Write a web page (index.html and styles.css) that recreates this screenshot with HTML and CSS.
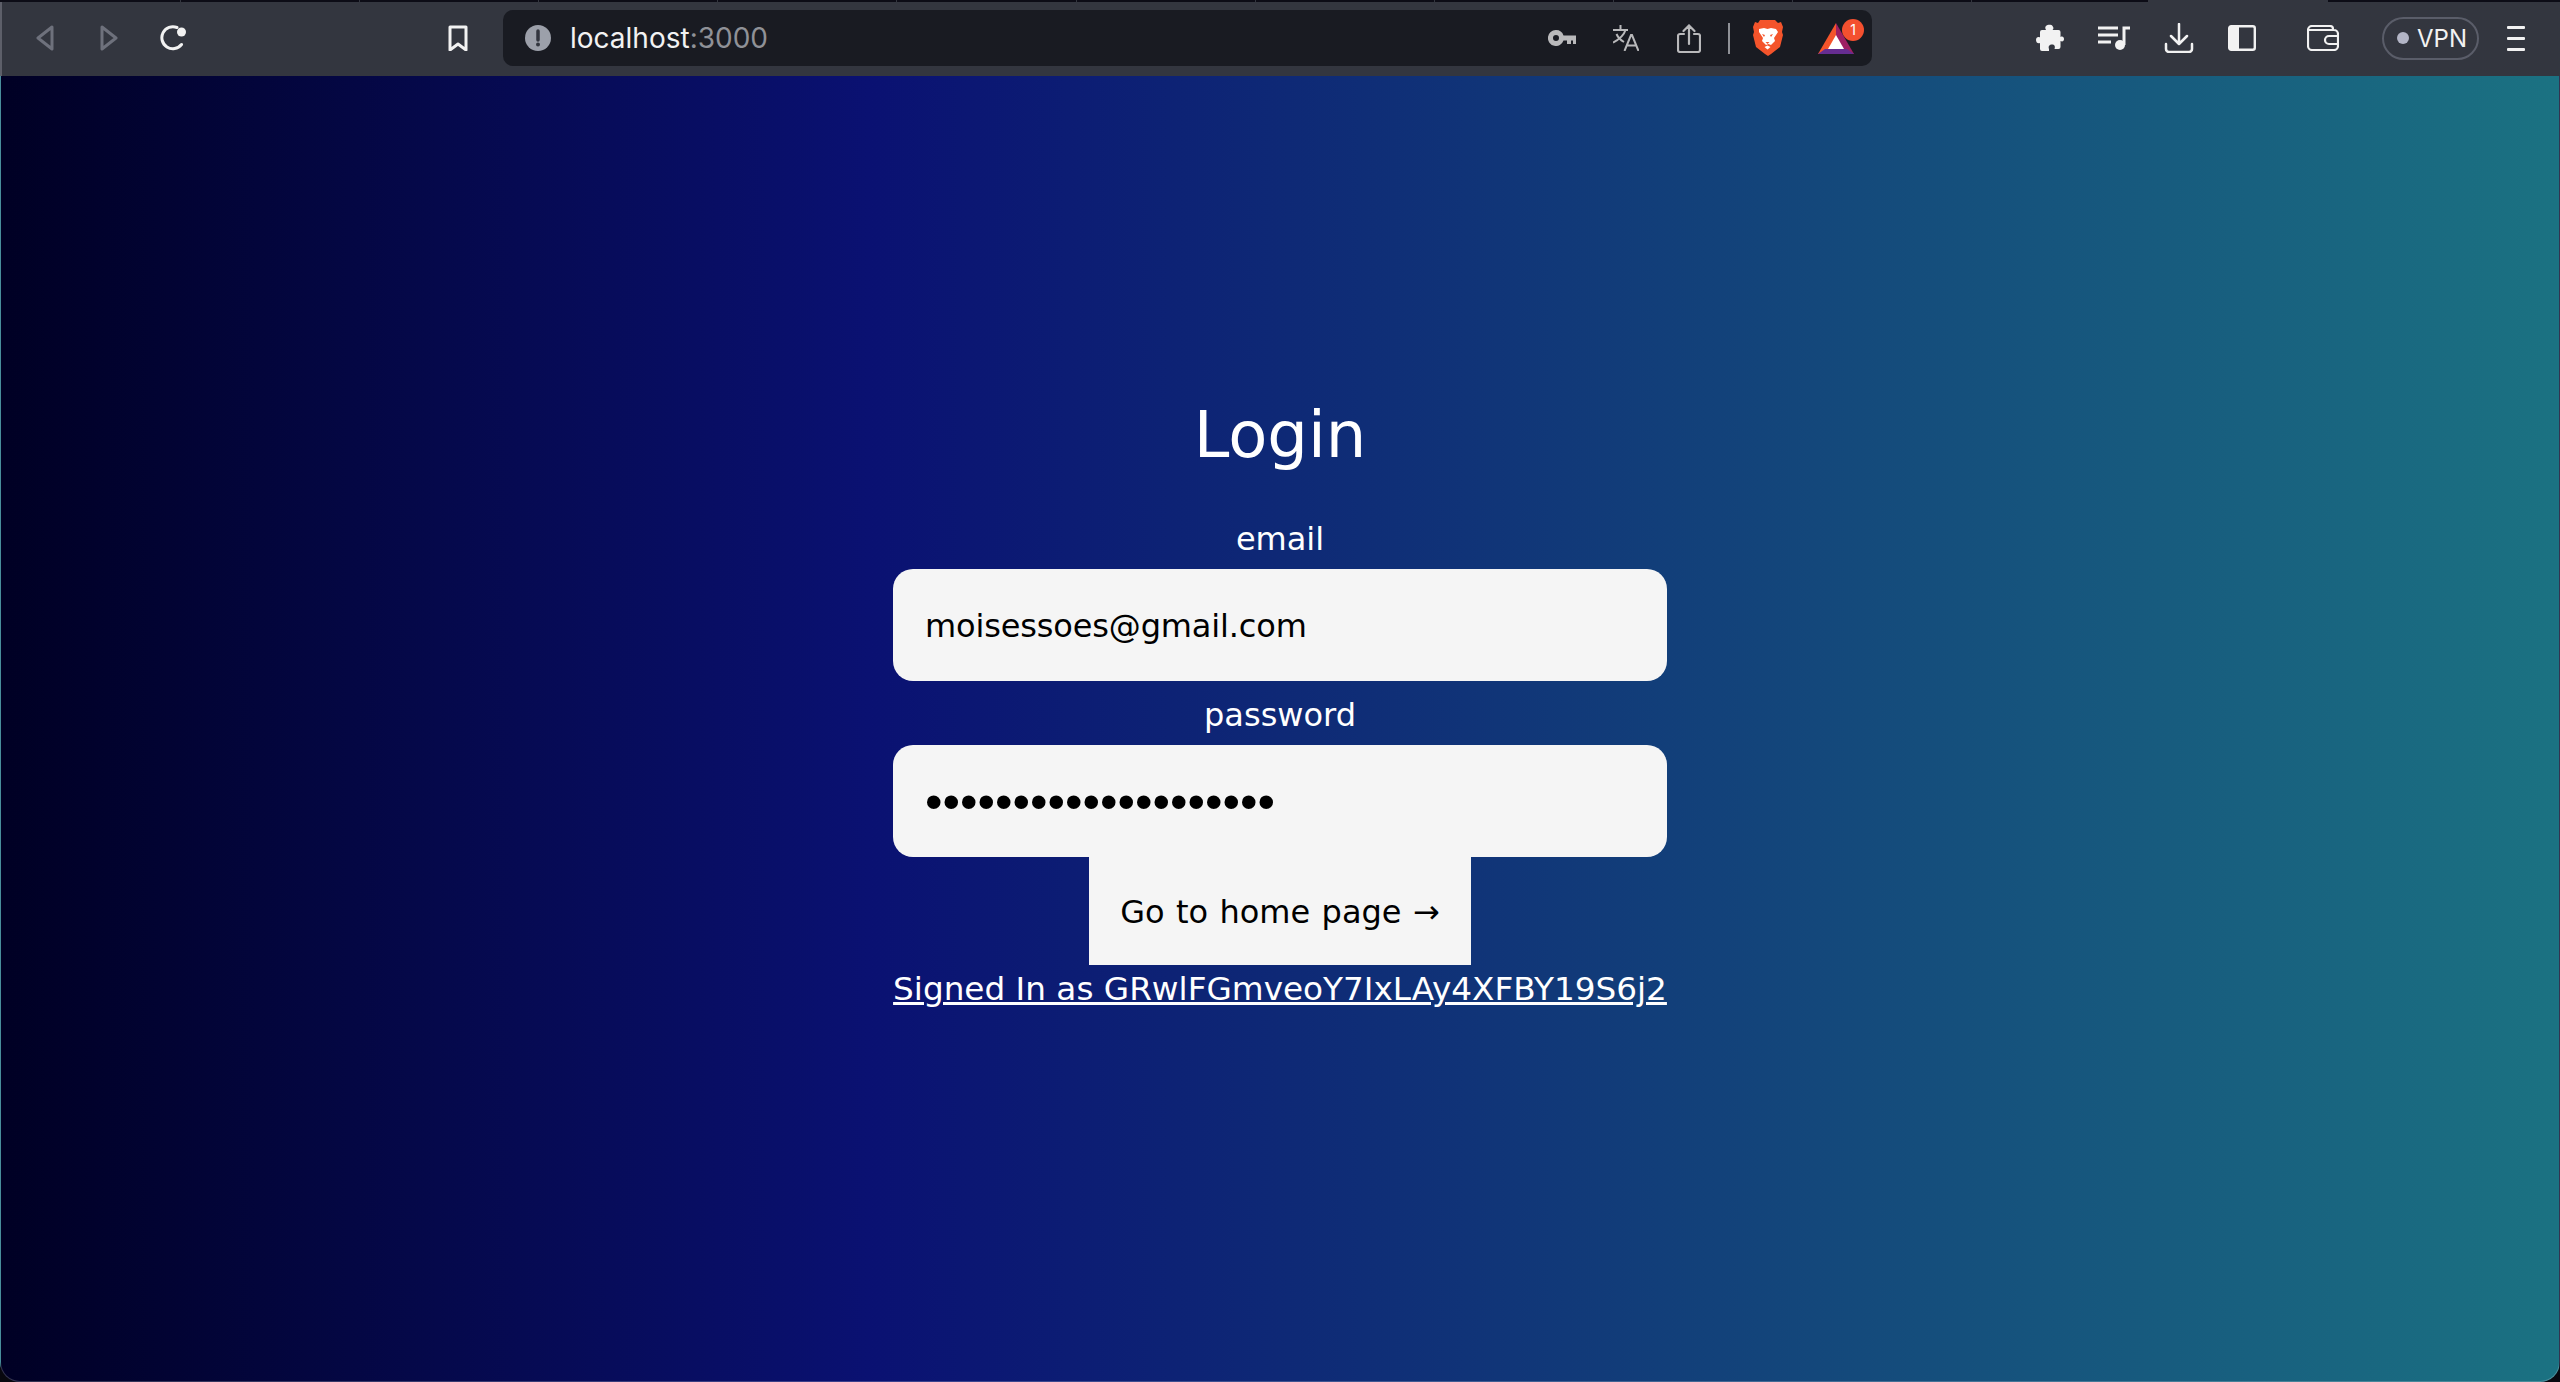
FILE: index.html
```html
<!DOCTYPE html>
<html lang="en">
<head>
  <meta charset="UTF-8">
  <meta name="viewport" content="width=device-width, initial-scale=1.0">
  <title>Login</title>
  <link rel="stylesheet" href="styles.css">
</head>
<body>

  <!-- Tab strip -->
  <div class="tabs">
    <div class="tab"></div><div class="tab"></div><div class="tab"></div><div class="tab"></div>
    <div class="tab"></div><div class="tab"></div><div class="tab"></div><div class="tab"></div>
    <div class="tab"></div><div class="tab"></div><div class="tab"></div><div class="tab"></div>
    <div class="tab active"></div>
  </div>

  <!-- Browser toolbar -->
  <div class="toolbar">
    <div class="nav">
      <svg class="icon back" width="20" height="26" viewBox="0 0 20 26"><path d="M17 2 3 13l14 11z" fill="none" stroke="#6e717c" stroke-width="3" stroke-linejoin="round"/></svg>
      <svg class="icon forward" width="20" height="26" viewBox="0 0 20 26"><path d="M3 2l14 11L3 24z" fill="none" stroke="#6e717c" stroke-width="3" stroke-linejoin="round"/></svg>
      <svg class="icon reload" width="28" height="26" viewBox="0 0 28 26"><path d="M21.500 19.500A11 11 0 1 1 17 2.500" fill="none" stroke="#f2f2f2" stroke-width="3" stroke-linecap="round"/><circle cx="21.500" cy="7" r="4.500" fill="#f2f2f2"/></svg>
      <svg class="icon bookmark" width="20" height="26" viewBox="0 0 20 26"><path d="M2 2h16v23l-8-6-8 6z" fill="none" stroke="#f2f2f2" stroke-width="3" stroke-linejoin="round"/></svg>
    </div>

    <div class="urlbar">
      <svg class="icon info" width="26" height="26" viewBox="0 0 26 26"><circle cx="13" cy="13" r="13" fill="#9ca0aa"/><path d="M13 6v9" stroke="#33363f" stroke-width="3.500" stroke-linecap="round"/><circle cx="13" cy="19.500" r="2" fill="#33363f"/></svg>
      <div class="url">localhost<span class="port">:3000</span></div>
      <div class="url-actions">
        <svg class="icon" width="28" height="16" viewBox="0 0 28 16"><path d="M8 0a8 8 0 1 0 7.500 10.500H19V14h4v-3.500h2V14h3V5.500H15.500A8 8 0 0 0 8 0zm0 5a3 3 0 1 1 0 6 3 3 0 0 1 0-6z" fill="#b9b9bb"/></svg>
        <svg class="icon" width="26" height="26" viewBox="0 0 26 26"><path d="M0 5h15M7.500 0v5M12.500 5C11 10 7 14 0 17.500M3.500 9c1.500 3.500 4 6 7.500 8M11.500 26l6.500-16h1l6.500 16M14 20.500h9" fill="none" stroke="#b9b9bb" stroke-width="2"/></svg>
        <svg class="icon share" width="24" height="29" viewBox="0 0 24 29"><path d="M7 10H3a2 2 0 0 0-2 2v14a2 2 0 0 0 2 2h18a2 2 0 0 0 2-2V12a2 2 0 0 0-2-2h-4M12 20V2M6.500 7 12 1.500 17.500 7" fill="none" stroke="#b9b9bb" stroke-width="2.200" stroke-linecap="round"/></svg>
        <span class="divider"></span>
        <svg class="icon" width="31" height="36" viewBox="0 0 31 36"><path d="M8 0h15l3 3 3-1 2 5-1 5 1 3-3 12-9 7-3 2-3-2-9-7L1 15l1-3-1-5 2-5 3 1z" fill="#f4542b"/><path d="M7 9l5-1 3.500 1L19 8l5 1 2 3-4 6 1 3-4 4-2.500-1-2.500 1-4-4 1-3-4-6z" fill="#fff"/><path d="M12.500 27l3-1.500 3 1.500-3 2.500z" fill="#fff"/><path d="M10 14l3 1-1 2zM21 14l-3 1 1 2zM13.500 22h4l-2 2z" fill="#f4542b"/></svg>
        <div class="rewards">
          <svg class="icon" width="36" height="31" viewBox="0 0 36 31"><path d="M18 0 0 31h11l7-12z" fill="#f4542b"/><path d="M18 0l18 31H25l-7-12z" fill="#9e1f63"/><path d="M0 31l7-5h22l7 5z" fill="#662d91"/><path d="M18 12l8 14H10z" fill="#fff"/></svg>
          <span class="badge">1</span>
        </div>
      </div>
    </div>

    <div class="tools">
      <svg class="icon" width="28" height="29" viewBox="0 0 28 29"><path d="M10 6C9 4 9 3 10 2s5-2 6.500 0 1 3 0 4h6a2 2 0 0 1 2 2v5c2-1 3.500 0 3.500 2s-1.500 3-3.500 2v6a2 2 0 0 1-2 2h-4c1-2.500 0-4.500-2.500-4.500S12 22 13 25v2H6a2 2 0 0 1-2-2v-6c-2 1-4-.5-4-3s2-3.500 4-2.500V8a2 2 0 0 1 2-2z" fill="#f2f2f2"/></svg>
      <svg class="icon" width="32" height="24" viewBox="0 0 32 24"><path d="M0 2h20M0 9h20M0 16h13" stroke="#f2f2f2" stroke-width="3"/><path d="M26 19V2h6" fill="none" stroke="#f2f2f2" stroke-width="3"/><circle cx="22" cy="19" r="5" fill="#f2f2f2"/></svg>
      <svg class="icon" width="30" height="30" viewBox="0 0 30 30"><path d="M15 1v19M7 13l8 8 8-8" fill="none" stroke="#f2f2f2" stroke-width="2.500" stroke-linecap="round" stroke-linejoin="round"/><path d="M2 21v5a3 3 0 0 0 3 3h20a3 3 0 0 0 3-3v-5" fill="none" stroke="#f2f2f2" stroke-width="2.500" stroke-linecap="round"/></svg>
      <svg class="icon" width="28" height="26" viewBox="0 0 28 26"><rect x="1.200" y="1.200" width="25.600" height="23.600" rx="2" fill="none" stroke="#f2f2f2" stroke-width="2.400"/><rect x="1" y="1" width="10" height="24" fill="#f2f2f2"/></svg>
      <svg class="icon wallet" width="32" height="26" viewBox="0 0 32 26"><path d="M26 5V4a3 3 0 0 0-3-3H5a4 4 0 0 0-4 4v16a4 4 0 0 0 4 4h22a4 4 0 0 0 4-4V9a4 4 0 0 0-4-4H2" fill="none" stroke="#f2f2f2" stroke-width="2.200"/><path d="M31 11h-9a4 4 0 0 0 0 8h9" fill="none" stroke="#f2f2f2" stroke-width="2.200"/></svg>
      <div class="vpn"><span class="vpn-dot"></span>VPN</div>
      <div class="menu"><span></span><span></span><span></span></div>
    </div>
  </div>

  <!-- Login form -->
  <main class="page">
    <form class="login-form">
      <h1>Login</h1>
      <label for="email">email</label>
      <input type="text" id="email" value="moisessoes@gmail.com">
      <label for="password">password</label>
      <input type="password" id="password" value="passwordpassword1234">
      <button type="button">Go to home page →</button>
      <a href="#">Signed In as GRwlFGmveoY7IxLAy4XFBY19S6j2</a>
    </form>
  </main>

</body>
</html>
```

FILE: styles.css
```css
html, body {
  height: 100%;
}

body {
  margin: 0;
  display: flex;
  flex-direction: column;
  font-family: "DejaVu Sans", sans-serif;
  background-color: #08080f;
  overflow: hidden;
}

.icon {
  display: block;
  flex: none;
}

/* Tab strip */
.tabs {
  display: flex;
  height: 2px;
  padding-left: 2px;
  background-color: #0c0c16;
}

.tab {
  width: 179.100px;
  height: 2px;
  border-right: 1px solid #33363f;
  box-sizing: border-box;
}

.tab.active {
  width: 180px;
  margin-left: -3px;
  background-color: #33363f;
  border-right: none;
}

/* Toolbar */
.toolbar {
  display: flex;
  align-items: center;
  height: 74px;
  padding: 0 35px 2px 33px;
  box-sizing: border-box;
  background-color: #33363f;
  border-left: 2px solid #5d5f69;
}

.nav {
  display: flex;
  align-items: center;
  width: 468px;
}

.forward {
  margin-left: 44px;
}

.reload {
  margin-left: 41px;
}

.bookmark {
  margin-left: 260px;
}

.urlbar {
  display: flex;
  align-items: center;
  width: 1369px;
  height: 56px;
  padding: 0 18px 0 22px;
  box-sizing: border-box;
  background-color: #191b22;
  border-radius: 10px;
}

.url {
  margin-left: 19px;
  font-family: Inter, sans-serif;
  font-size: 28px;
  color: #f2f2f2;
}

.port {
  color: #8f9197;
}

.url-actions {
  display: flex;
  align-items: center;
  gap: 37px;
  margin-left: auto;
}

.share {
  margin-left: 1px;
}

.divider {
  width: 2px;
  height: 31px;
  margin: 0 -15px 0 -10px;
  background-color: #8f9197;
}

.rewards {
  position: relative;
  margin-left: -2px;
}

.badge {
  position: absolute;
  top: -4px;
  right: -10px;
  width: 22px;
  height: 22px;
  border-radius: 50%;
  background-color: #f4502f;
  color: #fff;
  font-family: Inter, sans-serif;
  font-size: 14px;
  line-height: 22px;
  text-align: center;
}

.tools {
  display: flex;
  align-items: center;
  gap: 34px;
  margin-left: auto;
}

.wallet {
  margin-left: 17px;
}

.vpn {
  display: flex;
  align-items: center;
  gap: 8px;
  height: 43px;
  width: 97px;
  margin-left: 9px;
  padding-left: 13px;
  box-sizing: border-box;
  border: 2px solid #5a5d69;
  border-radius: 22px;
  font-family: Inter, sans-serif;
  font-size: 24px;
  color: #f2f2f2;
}

.vpn-dot {
  width: 12px;
  height: 12px;
  border-radius: 50%;
  background-color: #b3b5c6;
}

.menu {
  display: flex;
  flex-direction: column;
  gap: 8px;
  width: 18px;
  margin-left: -6px;
}

.menu span {
  height: 3px;
  border-radius: 1px;
  background-color: #f2f2f2;
}

/* Login page */
.page {
  flex: 1;
  display: flex;
  justify-content: center;
  padding-top: 322px;
  background: linear-gradient(to right, #000024, #0a1172 34%, #1b7282);
  border: 1px solid rgba(255, 255, 255, 0.2);
  border-top: none;
  border-radius: 0 0 20px 20px;
}

.login-form {
  display: flex;
  flex-direction: column;
  align-items: center;
  width: 774px;
  color: #fff;
}

h1 {
  margin: 0 0 48px 0;
  font-size: 64px;
  font-weight: 400;
}

label {
  font-size: 32px;
  line-height: 39px;
  margin-bottom: 10px;
}

input {
  width: 100%;
  height: 112px;
  padding: 2px 32px 0 32px;
  box-sizing: border-box;
  border: none;
  border-radius: 20px;
  background-color: #f5f5f5;
  font-family: "DejaVu Sans", sans-serif;
  font-size: 32px;
  letter-spacing: -0.150px;
  color: #000;
  margin-bottom: 15px;
}

input[type="password"] {
  margin-bottom: 0;
  font-family: "Liberation Sans", sans-serif;
  font-size: 50px;
  letter-spacing: 0;
}

button {
  width: 382px;
  height: 108px;
  padding-top: 2px;
  border: none;
  background-color: #f5f5f5;
  font-family: "DejaVu Sans", sans-serif;
  font-size: 32px;
  word-spacing: 1.200px;
  color: #000;
}

a {
  margin-top: 5px;
  font-size: 32.700px;
  color: #fff;
  white-space: nowrap;
}
```
